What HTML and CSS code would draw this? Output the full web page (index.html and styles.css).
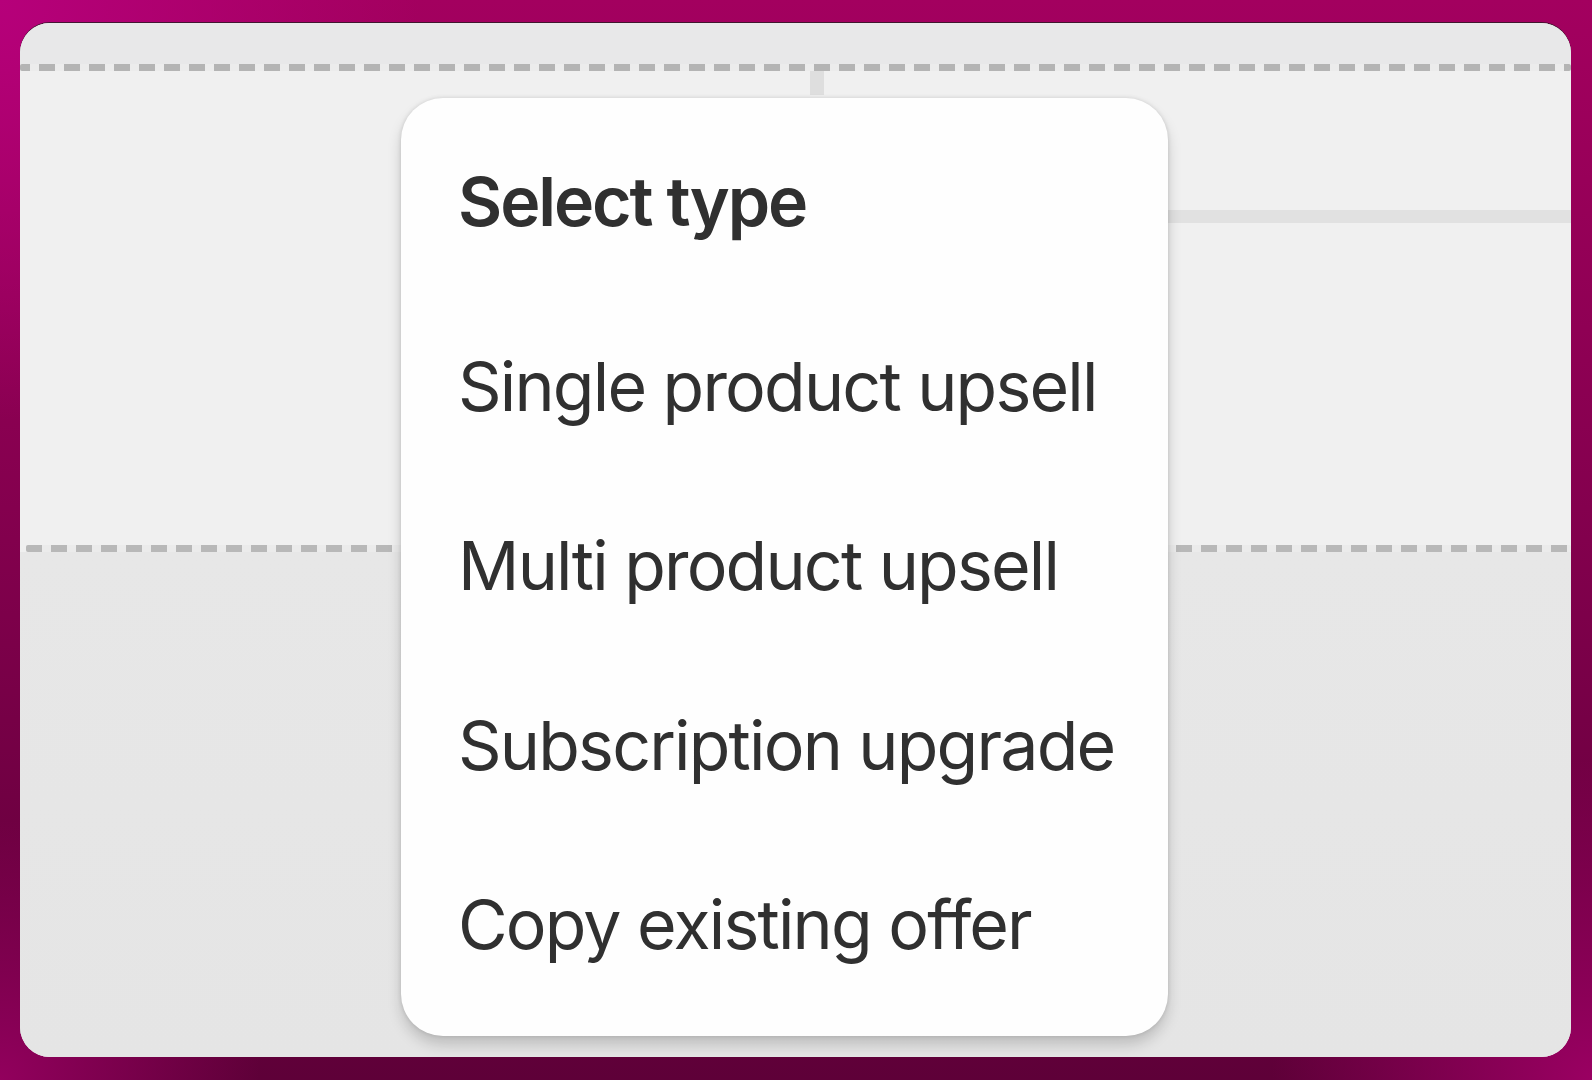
FILE: index.html
```html
<!DOCTYPE html>
<html lang="en">
<head>
<meta charset="utf-8">
<title>Select type</title>
<link rel="stylesheet" href="styles.css">
</head>
<body>
<div class="frame">
  <div class="card">
    <div class="band-top"></div>
    <div class="dash"></div>
    <div class="band-mid">
      <div class="tick"></div>
      <div class="rail"></div>
    </div>
    <div class="dash dash-inset"></div>
    <div class="band-bottom"></div>

    <div class="popover" role="menu">
      <div class="popover-title">Select type</div>
      <div class="item" role="menuitem">Single product upsell</div>
      <div class="item" role="menuitem">Multi product upsell</div>
      <div class="item" role="menuitem">Subscription upgrade</div>
      <div class="item" role="menuitem">Copy existing offer</div>
    </div>
  </div>
</div>
</body>
</html>
```
FILE: styles.css
```css
html, body {
  margin: 0;
  padding: 0;
}

body {
  width: 1592px;
  height: 1080px;
  overflow: hidden;
  font-family: Inter, "Noto Sans", "Liberation Sans", sans-serif;
}

.frame {
  box-sizing: border-box;
  width: 1592px;
  height: 1080px;
  padding: 23px 21px 23px 20px;
  display: flex;
  background:
    radial-gradient(circle at 0 0, #b6007a 0, rgba(182, 0, 122, 0) 420px),
    radial-gradient(circle at 100% 100%, #9a0062 0, rgba(154, 0, 98, 0) 320px),
    radial-gradient(circle at 0 100%, #92005d 0, rgba(146, 0, 93, 0) 260px),
    linear-gradient(180deg, #a3005f 0%, #82004d 50%, #5e0038 100%);
}

.card {
  position: relative;
  flex: 1;
  display: flex;
  flex-direction: column;
  border-radius: 30px;
  overflow: hidden;
  background: #f0f0f0;
  box-shadow: 0 -1px 0 rgba(30, 30, 30, 0.75);
}

.band-top {
  height: 41px;
  background: #e8e8e9;
  flex: none;
}

.dash {
  flex: none;
  height: 7px;
  background:
    repeating-linear-gradient(90deg, #b4b4b4 0 16px, transparent 16px 25px),
    #ececec;
  background-position: -6px 0;
  border-radius: 2px;
}

.dash-inset {
  background:
    repeating-linear-gradient(90deg, #b8b8b8 0 16px, transparent 16px 25px),
    #ebebeb;
  margin-left: 6px;
}

.band-mid {
  flex: none;
  height: 474px;
  background: #f0f0f0;
  display: flex;
  flex-direction: column;
}

.tick {
  margin-left: 790px;
  width: 14px;
  height: 24px;
  background: #dedede;
}

.rail {
  margin-top: 115px;
  margin-left: 1080px;
  height: 13px;
  background: #e1e1e1;
}

.band-bottom {
  flex: 1;
  background: linear-gradient(180deg, #e7e7e7 0%, #e5e5e5 100%);
}

.popover {
  position: absolute;
  left: 381px;
  top: 75px;
  box-sizing: border-box;
  width: 767px;
  height: 938px;
  padding: 63px 0 16px 57px;
  background: #fefefe;
  border-radius: 42px;
  box-shadow:
    0 9px 14px rgba(0, 0, 0, 0.17),
    0 0 4px rgba(0, 0, 0, 0.13);
  color: #303030;
  display: flex;
  flex-direction: column;
}

.popover-title {
  font-size: 68px;
  line-height: 1.2;
  font-weight: 600;
  letter-spacing: -2.1px;
  margin-bottom: 54px;
}

.item {
  font-size: 68px;
  line-height: 1.2;
  font-weight: 400;
  letter-spacing: -1.8px;
  padding: 49px 0;
  white-space: nowrap;
}
```
